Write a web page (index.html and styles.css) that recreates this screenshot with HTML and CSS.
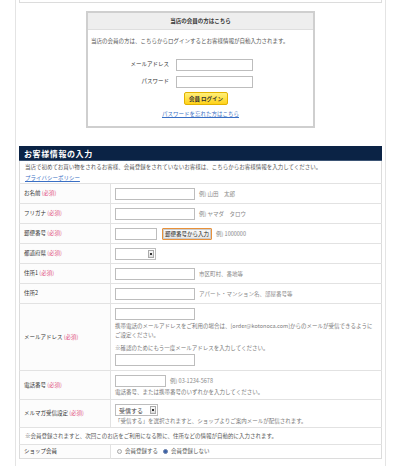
FILE: index.html
```html
<!DOCTYPE html>
<html lang="ja">
<head>
<meta charset="utf-8">
<link rel="stylesheet" href="styles.css">
</head>
<body>
<div class="page">
  <div class="prev"></div>

  <div class="login">
    <div class="login-head">当店の会員の方はこちら</div>
    <p class="login-text">当店の会員の方は、こちらからログインするとお客様情報が自動入力されます。</p>
    <div class="login-row first"><span class="login-label">メールアドレス</span><span class="inp login-inp"></span></div>
    <div class="login-row"><span class="login-label">パスワード</span><span class="inp login-inp"></span></div>
    <div class="login-btn-wrap"><span class="login-btn">会員 ログイン</span></div>
    <div class="login-link"><a href="#">パスワードを忘れた方はこちら</a></div>
  </div>

  <div class="form">
    <div class="form-head">お客様情報の入力</div>
    <div class="form-desc">
      <p>当店で初めてお買い物をされるお客様、会員登録をされていないお客様は、こちらからお客様情報を入力してください。</p>
      <a href="#">プライバシーポリシー</a>
    </div>
    <table class="tbl">
      <tr>
        <th>お名前 <span class="req">(必須)</span></th>
        <td><span class="inp w80"></span><span class="ex">例) 山田　太郎</span></td>
      </tr>
      <tr>
        <th>フリガナ <span class="req">(必須)</span></th>
        <td><span class="inp w80"></span><span class="ex">例) ヤマダ　タロウ</span></td>
      </tr>
      <tr>
        <th>郵便番号 <span class="req">(必須)</span></th>
        <td><span class="inp w42"></span><span class="zip-btn">郵便番号から入力</span><span class="ex">例) 1000000</span></td>
      </tr>
      <tr>
        <th>都道府県 <span class="req">(必須)</span></th>
        <td><span class="sel w41"><span class="sel-arrow"></span></span></td>
      </tr>
      <tr>
        <th>住所1 <span class="req">(必須)</span></th>
        <td><span class="inp w80"></span><span class="ex">市区町村、番地等</span></td>
      </tr>
      <tr>
        <th>住所2</th>
        <td><span class="inp w80"></span><span class="ex">アパート・マンション名、部屋番号等</span></td>
      </tr>
      <tr>
        <th>メールアドレス <span class="req">(必須)</span></th>
        <td class="mail">
          <span class="inp w80 blk"></span>
          <p class="note note-mail">携帯電話のメールアドレスをご利用の場合は、[order@kotonoca.com]からのメールが受信できるようにご設定ください。</p>
          <p class="note note-confirm">※確認のためにもう一度メールアドレスを入力してください。</p>
          <span class="inp w80 blk"></span>
        </td>
      </tr>
      <tr>
        <th>電話番号 <span class="req">(必須)</span></th>
        <td class="multi">
          <div class="line"><span class="inp w51"></span><span class="ex">例) 03-1234-5678</span></div>
          <p class="note">電話番号、または携帯番号のいずれかを入力してください。</p>
        </td>
      </tr>
      <tr>
        <th>メルマガ受信設定 <span class="req">(必須)</span></th>
        <td class="multi tight">
          <div class="line"><span class="sel w43"><span class="sel-text">受信する</span><span class="sel-arrow"></span></span></div>
          <p class="note">「受信する」を選択されますと、ショップよりご案内メールが配信されます。</p>
        </td>
      </tr>
      <tr>
        <td class="full" colspan="2">※会員登録されますと、次回このお店をご利用になる際に、住所などの情報が自動的に入力されます。</td>
      </tr>
      <tr class="shop">
        <th>ショップ会員</th>
        <td><span class="radio"></span>会員登録する<span class="radio on"></span>会員登録しない</td>
      </tr>
    </table>
  </div>
</div>
</body>
</html>
```

FILE: styles.css
```css
* { box-sizing: border-box; }
html, body { margin: 0; padding: 0; background: #fff; }
body {
  font-family: "Noto Sans CJK JP", "Noto Sans", sans-serif;
  font-size: 5.5px;
  line-height: 9px;
  color: #444;
  width: 399px;
  height: 466px;
  overflow: hidden;
}
p { margin: 0; }
a { color: #3a6fc4; text-decoration: underline; }

.page {
  margin-left: 15px;
  width: 371px;
  min-height: 466px;
  border-left: 1px solid #e4e4e4;
  border-right: 1px solid #e4e4e4;
  padding: 0 3px;
}
.prev {
  height: 3px;
  border: 1px solid #dcdcdc;
  border-top: none;
}

/* login box */
.login {
  width: 229px;
  margin: 8px 0 0 67px;
  height: 117px;
  border: 2px solid #cfcfcf;
}
.login-head {
  height: 17px;
  background: #eeeeee;
  border-bottom: 1px solid #dedede;
  text-align: center;
  font-weight: bold;
  line-height: 17px;
  color: #333;
}
.login-text { padding: 7px 0 0 3px; line-height: 8px; color: #555; }
.login-row {
  display: flex;
  align-items: center;
  margin-top: 4px;
  height: 13px;
}
.login-row.first { margin-top: 13px; }
.login-label {
  width: 88px;
  text-align: right;
  padding-right: 7px;
  color: #333;
}
.login-inp { width: 77px; height: 13px; }
.login-btn-wrap { margin-top: 4px; padding-left: 96px; height: 13px; }
.login-btn {
  display: inline-block;
  width: 44px;
  height: 13px;
  line-height: 12px;
  text-align: center;
  font-weight: bold;
  color: #333;
  border: 1px solid #e2b200;
  border-radius: 2px;
  background: linear-gradient(#fff07a, #ffd21a);
}
.login-link { text-align: center; margin-top: 5px; line-height: 8px; }

/* inputs */
.inp {
  display: inline-block;
  vertical-align: middle;
  height: 12px;
  border: 1px solid #bdbdbd;
  background: #fff;
}
.inp.blk { display: block; }
.w80 { width: 80px; }
.w42 { width: 42px; }
.w51 { width: 51px; }
.ex { color: #888; margin-left: 4px; vertical-align: middle; }

.sel {
  display: inline-flex;
  align-items: center;
  justify-content: space-between;
  vertical-align: middle;
  height: 12px;
  border: 1px solid #bdbdbd;
  background: #fff;
  padding: 0 1px 0 3px;
}
.w41 { width: 41px; }
.w43 { width: 43px; }
.sel-text { color: #444; font-size: 6px; }
.sel-arrow {
  margin-left: auto;
  width: 6px;
  height: 8px;
  border: 1px solid #aaa;
  background: linear-gradient(#fafafa, #ddd);
  position: relative;
}
.sel-arrow::after {
  content: "";
  position: absolute;
  left: 1px;
  top: 2px;
  width: 2px;
  height: 2px;
  background: #333;
}

.zip-btn {
  display: inline-block;
  vertical-align: middle;
  margin-left: 5px;
  height: 12px;
  line-height: 10px;
  padding: 0 2px;
  border: 1px solid #e8913a;
  border-radius: 1px;
  background: linear-gradient(#fafafa, #e6e6e6);
  color: #222;
  box-shadow: inset 0 0 0 1px #ccc;
}

/* form */
.form { margin-top: 18px; }
.form-head {
  height: 15px;
  background: #0b2345;
  border-bottom: 1px solid #3d5575;
  color: #fff;
  font-weight: bold;
  font-size: 8px;
  letter-spacing: 0.6px;
  line-height: 15px;
  padding-left: 5px;
}
.form-desc {
  border-left: 1px solid #dcdcdc;
  border-right: 1px solid #dcdcdc;
  padding: 1px 5px 1px;
  line-height: 11px;
  height: 22px;
  color: #555;
}
.form-desc a { display: inline-block; line-height: 10px; }

.tbl {
  width: 100%;
  border-collapse: collapse;
  border: 1px solid #dcdcdc;
}
.tbl th, .tbl td {
  border-top: 1px solid #e2e2e2;
  vertical-align: middle;
  text-align: left;
}
.tbl th {
  width: 91px;
  font-weight: normal;
  color: #333;
  padding: 0 4px;
  border-right: 1px solid #e2e2e2;
  background: #fcfcfc;
}
.tbl td {
  padding: 4px 4px 3px 4px;
  height: 20px;
  color: #555;
}
.line { height: 12px; display: flex; align-items: center; }
.req { color: #e0507e; }
.note { color: #777; line-height: 9px; }
.tbl td.multi { padding: 4px 4px 2px; }
.tbl td.multi.tight { padding: 4px 4px 1px; }
.multi .note { margin-top: 1px; }
.tbl td.mail { padding: 4px 4px 4px; }
.note-mail { margin-top: 2px; }
.note-confirm { margin-top: 4px; margin-bottom: 1px; }
.tbl td.full { padding: 0 5px; height: 17px; color: #555; }
.shop th, .shop td { height: 14px; }
.tbl .shop td { padding-top: 0; padding-bottom: 0; }

.radio {
  display: inline-block;
  vertical-align: middle;
  width: 5px;
  height: 5px;
  border: 1px solid #aaa;
  border-radius: 50%;
  margin: 0 3px 0 2px;
  background: #f4f4f4;
}
.radio.on { margin-left: 5px; background: #3b62a8; border-color: #6b7fa8; }
```
